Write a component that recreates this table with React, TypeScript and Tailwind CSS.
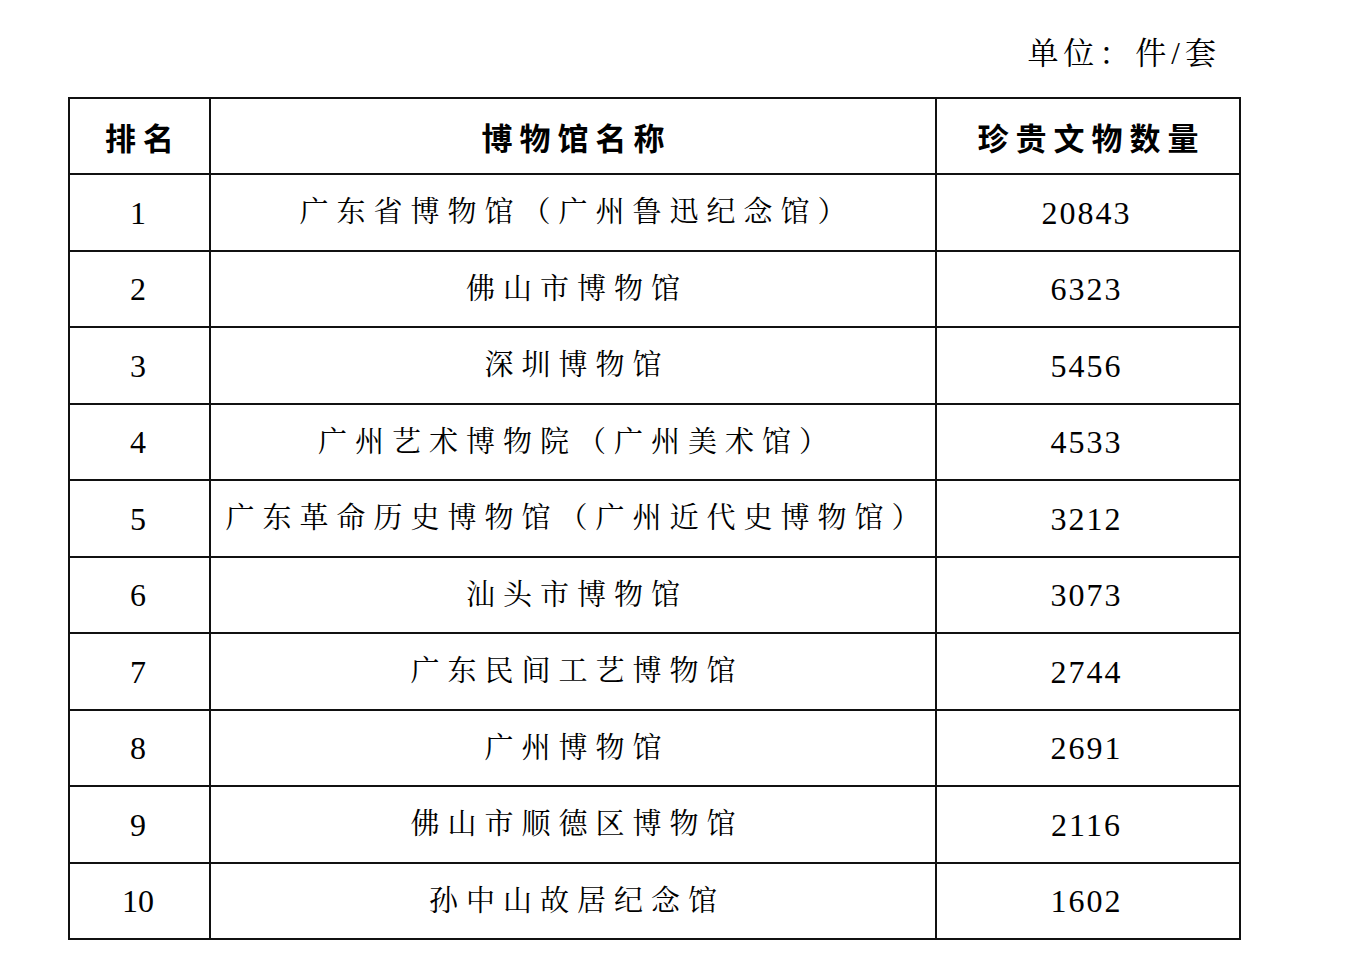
const rows: [string, string, string][] = [
  ["1", "广东省博物馆（广州鲁迅纪念馆）", "20843"],
  ["2", "佛山市博物馆", "6323"],
  ["3", "深圳博物馆", "5456"],
  ["4", "广州艺术博物院（广州美术馆）", "4533"],
  ["5", "广东革命历史博物馆（广州近代史博物馆）", "3212"],
  ["6", "汕头市博物馆", "3073"],
  ["7", "广东民间工艺博物馆", "2744"],
  ["8", "广州博物馆", "2691"],
  ["9", "佛山市顺德区博物馆", "2116"],
  ["10", "孙中山故居纪念馆", "1602"],
];

const serif = "font-[family-name:'Liberation_Serif','Noto_Serif_CJK_SC','Noto_Sans_CJK_SC',serif]";
const sans = "font-[family-name:'Noto_Sans_CJK_SC',sans-serif]";

export default function App() {
  return (
    <div className="min-h-[958px] w-[1360px] bg-white text-black">
      <div className="ml-[68px] w-[1171px] pt-[33px]">
        <div className={`${serif} pr-[23px] text-right text-[31px] leading-[42px] tracking-[5px]`}>
          <span className="mr-[-5px]">单位：件/套</span>
        </div>
        <table className="mt-[22px] w-[1171px] table-fixed border-collapse border-2 border-[#111]">
          <colgroup>
            <col className="w-[141px]" />
            <col className="w-[726px]" />
            <col className="w-[304px]" />
          </colgroup>
          <thead>
            <tr className="h-[76px]">
              {["排名", "博物馆名称", "珍贵文物数量"].map((h) => (
                <th
                  key={h}
                  className={`${sans} border-2 border-[#111] p-0 text-center align-middle text-[31px] font-bold leading-none tracking-[7px]`}
                >
                  <span className="mr-[-7px]">{h}</span>
                </th>
              ))}
            </tr>
          </thead>
          <tbody>
            {rows.map(([rank, name, count], i) => (
              <tr key={rank} className={i % 2 === 0 ? "h-[77px]" : "h-[76px]"}>
                <td className={`${serif} border-2 border-[#111] p-0 pr-[3px] text-center align-middle text-[32px] leading-none`}>
                  {rank}
                </td>
                <td className={`${serif} border-2 border-[#111] p-0 text-center align-middle text-[29px] leading-none tracking-[8px]`}>
                  <span className="mr-[-8px]">{name}</span>
                </td>
                <td className={`${serif} border-2 border-[#111] p-0 pr-[3px] text-center align-middle text-[32px] leading-none tracking-[2px]`}>
                  {count}
                </td>
              </tr>
            ))}
          </tbody>
        </table>
      </div>
    </div>
  );
}
